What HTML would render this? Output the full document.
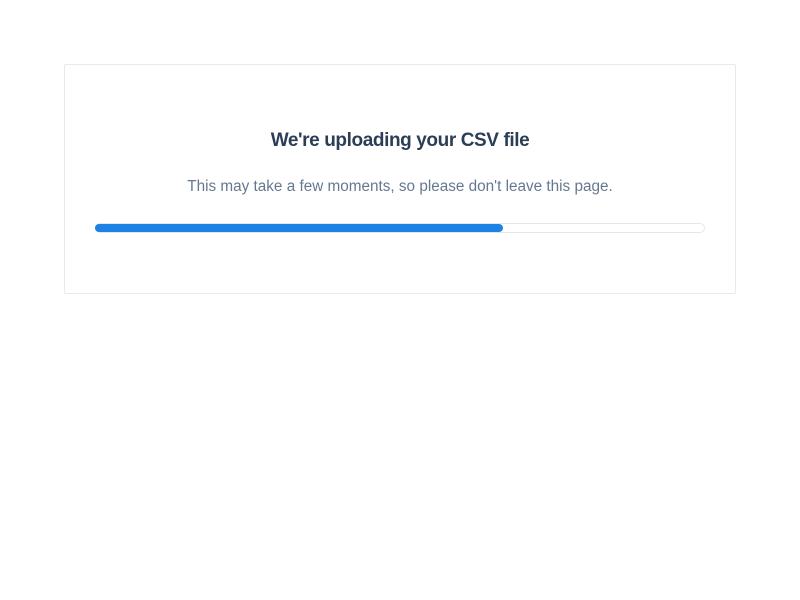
<!DOCTYPE html>
<html><head><style>
body{margin:0;background:#fff;font-family:"Liberation Sans",sans-serif;}
.card{position:absolute;left:64px;top:64px;width:670px;height:228px;border:1px solid #e6e9ed;border-radius:2px;}
h1{position:absolute;top:130px;left:0;width:800px;text-align:center;margin:0;font-size:19px;font-weight:bold;color:#2c3e55;letter-spacing:-0.4px;}
p{position:absolute;top:178px;left:0;width:800px;text-align:center;margin:0;font-size:15.3px;color:#66788f;}
.track{position:absolute;left:95px;top:223px;width:608px;height:8px;border:1px solid #e3e7ec;border-radius:5px;}
.fill{position:absolute;left:95px;top:224px;width:408px;height:8px;background:#1c82e3;border-radius:4px;}
</style></head><body>
<div class="card"></div>
<h1>We're uploading your CSV file</h1>
<p>This may take a few moments, so please don't leave this page.</p>
<div class="track"></div><div class="fill"></div>
</body></html>
